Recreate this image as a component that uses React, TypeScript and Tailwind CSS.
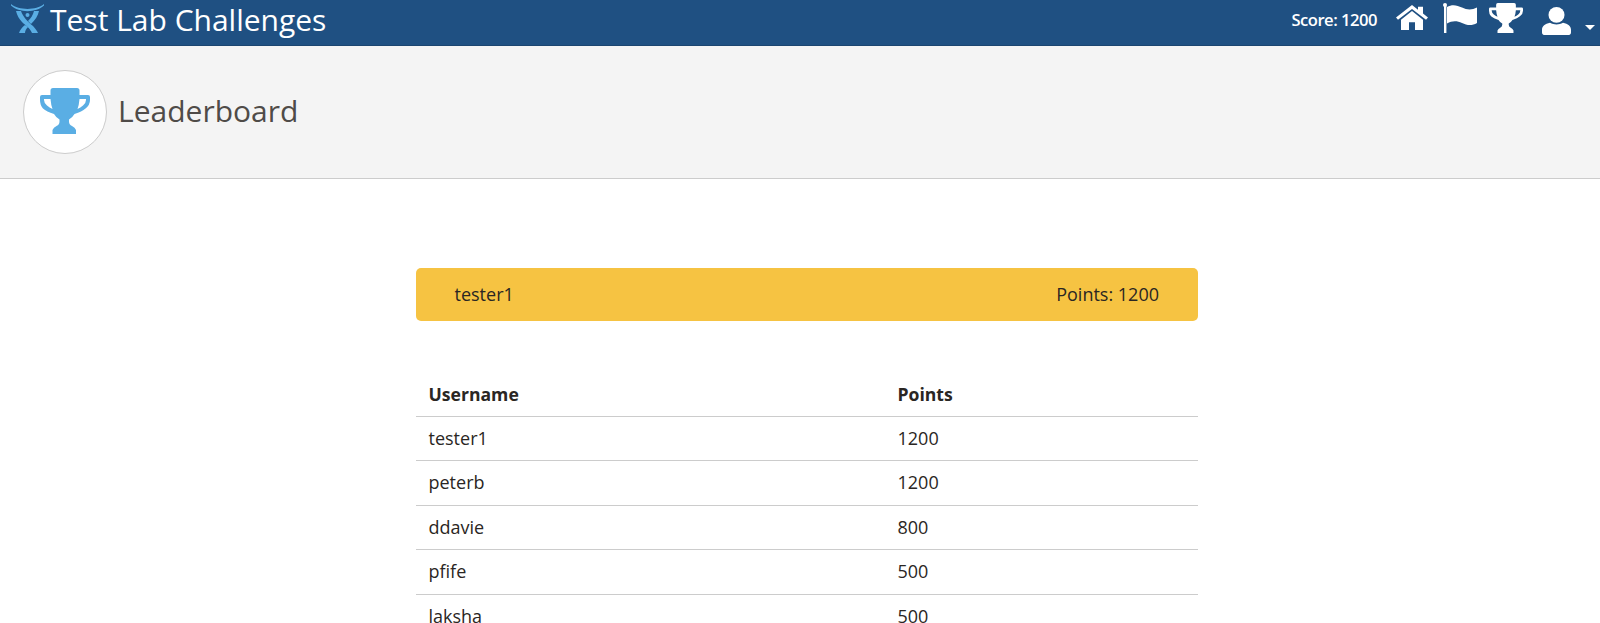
const Trophy = ({ className, fill }: { className: string; fill: string }) => (
  <svg viewBox="0 0 50 46" preserveAspectRatio="none" className={className}>
    <path
      fill={fill}
      fillRule="evenodd"
      d="M13 0h24q2.500 0 2.500 2.500V7h8.500q2 0 2 2v3q0 5-4.500 8.500-3.500 3-11 5.500-2 3.500-5.500 5.500v2q0 3 3 4.500 3 1.500 4 4V46H12.500V42q1-2.500 4-4 3-1.500 3-4.500v-2q-3.500-2-5.500-5.500-7.500-2.500-11-5.500Q0 17 0 12V9q0-2 2-2h8.500V2.500Q10.500 0 13 0zM4 11v1q0 3 3 5.500 2.500 2 5.500 3.500-1.500-4-2-10zM46 11h-6.500q-.5 6-2 10 3-1.500 5.500-3.500 3-2.500 3-5.500z"
    />
  </svg>
);

const Logo = () => (
  <svg viewBox="0 0 34 30" className="w-[34px] h-[30px] shrink-0 -mt-[7px]">
    <path d="M0 0C8 6.500 25 6.500 33 0L33 1.500C25 9 8 9 0 1.500z" fill="#5aaee4" />
    <circle cx="16.500" cy="11" r="2" fill="#5aaee4" />
    <path d="M5 7L10 7C12 13 17 18 22 22C24 24 26 27 27 29L21 29C19 24 14 21 11 18C8 15 6 11 5 7z" fill="#5aaee4" />
    <path d="M28 7L23 7C22 11 20 14 17 17L20 20C24 16 27 12 28 7z" fill="#5aaee4" />
    <path d="M14 21L17 23C15 25 14 27 14 29L8 29C9 26 11 23 14 21z" fill="#5aaee4" />
  </svg>
);

const rows: [string, string][] = [
  ["tester1", "1200"],
  ["peterb", "1200"],
  ["ddavie", "800"],
  ["pfife", "500"],
  ["laksha", "500"],
];

export default function App() {
  return (
    <div className="h-[623px] overflow-hidden bg-white font-['Open_Sans',sans-serif] text-[#2a2623]">
      <header className="h-[46px] bg-[#1f5082] border-b border-[#1b4570] flex items-center text-white">
        <div className="ml-[11px] flex items-center">
          <Logo />
          <h1 className="ml-[5px] text-[30px] leading-[40px] -mt-[6px]">Test Lab Challenges</h1>
        </div>
        <div className="ml-auto flex items-start h-full">
          <span className="text-[16.6px] font-semibold tracking-[-0.5px] leading-[40px] mr-[19px]">Score: 1200</span>
          <svg viewBox="0 0 32 29" className="w-[32px] h-[25px] mt-[5px] mr-[15px]" preserveAspectRatio="none">
            <path fill="#fff" d="M16 0L0 14.500l2 2.500L16 4.500 30 17l2-2.500-5-4.500V2h-5v3.500zM16 7L5 17v12h8v-9h6v9h8V17z" />
          </svg>
          <svg viewBox="0 0 34 30" className="w-[34px] h-[30px] mt-[3px] mr-[12px]">
            <circle cx="2" cy="2" r="2" fill="#fff" />
            <rect x="1" y="3" width="2.400" height="27" fill="#fff" />
            <path fill="#fff" d="M4 4c5-3 10-2 15 .5s10 2.500 15 0V20c-5 3-10 2.500-15 0s-10-2.500-15 .5z" />
          </svg>
          <Trophy className="w-[34px] h-[30px] mt-[3px] mr-[19px]" fill="#fff" />
          <svg viewBox="0 0 29 32" preserveAspectRatio="none" className="w-[29px] h-[28px] mt-[7px]">
            <ellipse cx="14.500" cy="9" rx="8" ry="9" fill="#fff" />
            <path fill="#fff" d="M8 18c4 2.500 9 2.500 13 0 5 1 8 4 8 8v3c0 2-1.500 3-3 3H3c-1.500 0-3-1-3-3v-3c0-4 3-7 8-8z" />
          </svg>
          <span className="ml-[14px] mr-[5px] mt-[25px] w-0 h-0 border-x-[5px] border-x-transparent border-t-[5px] border-t-white" />
        </div>
      </header>

      <section className="h-[133px] bg-[#f4f4f4] border-b border-[#cccccc] flex items-center pl-[23px]">
        <div className="w-[84px] h-[84px] rounded-full bg-white border-[1.5px] border-[#cccccc] flex items-center justify-center">
          <Trophy className="w-[50px] h-[46px] -mt-[3px]" fill="#5aaee4" />
        </div>
        <h2 className="ml-[11px] text-[30px] leading-[40px] text-[#4f4b48] -mt-[2px]">Leaderboard</h2>
      </section>

      <main className="w-[782.500px] ml-[415.500px] pt-[89px] text-[18px]">
        <div className="h-[53px] rounded-[5px] bg-[#f6c342] flex items-center justify-between px-[39px]">
          <span>tester1</span>
          <span>Points: 1200</span>
        </div>
        <table className="w-full mt-[38px] border-collapse table-fixed">
          <thead>
            <tr className="h-[57px] border-b border-[#cccccc] text-left">
              <th className="pl-[13px] w-[482px] text-[17.6px] font-bold pt-[13px]">Username</th>
              <th className="text-[17.6px] font-bold pt-[13px]">Points</th>
            </tr>
          </thead>
          <tbody>
            {rows.map(([name, points]) => (
              <tr key={name} className="h-[44.500px] border-b border-[#cccccc]">
                <td className="pl-[13px]">{name}</td>
                <td>{points}</td>
              </tr>
            ))}
          </tbody>
        </table>
      </main>
    </div>
  );
}
